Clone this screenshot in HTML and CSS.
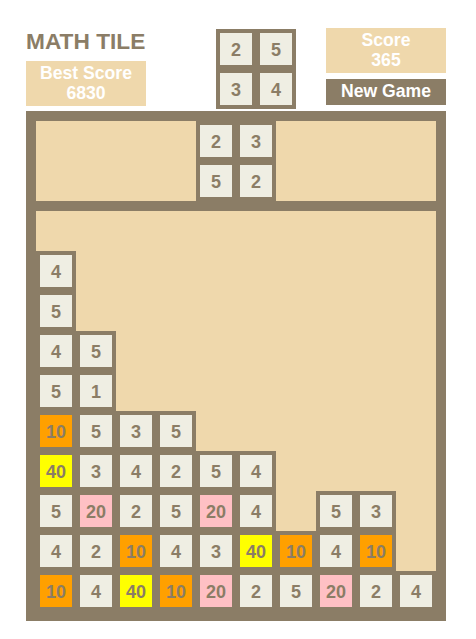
FILE: index.html
```html
<!DOCTYPE html>
<html>
<head>
<meta charset="utf-8">
<title>Math Tile</title>
<link rel="stylesheet" href="styles.css">
</head>
<body>
<div class="page">
  <div class="header">
    <div class="col">
      <div class="title">MATH TILE</div>
      <div class="info">Best Score<br>6830</div>
    </div>
    <div class="next">
      <div class="cell full"><div class="tile">2</div></div>
      <div class="cell full"><div class="tile">5</div></div>
      <div class="cell full"><div class="tile">3</div></div>
      <div class="cell full"><div class="tile">4</div></div>
    </div>
    <div class="col right">
      <div class="info">Score<br>365</div>
      <div class="btn">New Game</div>
    </div>
  </div>
  <div class="board">
    <div class="grid">
      <div class="cell"></div><div class="cell"></div><div class="cell"></div><div class="cell"></div>
      <div class="cell full"><div class="tile">2</div></div><div class="cell full"><div class="tile">3</div></div>
      <div class="cell"></div><div class="cell"></div><div class="cell"></div><div class="cell"></div>
      <div class="cell"></div><div class="cell"></div><div class="cell"></div><div class="cell"></div>
      <div class="cell full"><div class="tile">5</div></div><div class="cell full"><div class="tile">2</div></div>
      <div class="cell"></div><div class="cell"></div><div class="cell"></div><div class="cell"></div>
    </div>
    <div class="grid">
      <!-- row 0 -->
      <div class="cell"></div><div class="cell"></div><div class="cell"></div><div class="cell"></div><div class="cell"></div>
      <div class="cell"></div><div class="cell"></div><div class="cell"></div><div class="cell"></div><div class="cell"></div>
      <!-- row 1 -->
      <div class="cell full"><div class="tile">4</div></div>
      <div class="cell"></div><div class="cell"></div><div class="cell"></div><div class="cell"></div>
      <div class="cell"></div><div class="cell"></div><div class="cell"></div><div class="cell"></div><div class="cell"></div>
      <!-- row 2 -->
      <div class="cell full"><div class="tile">5</div></div>
      <div class="cell"></div><div class="cell"></div><div class="cell"></div><div class="cell"></div>
      <div class="cell"></div><div class="cell"></div><div class="cell"></div><div class="cell"></div><div class="cell"></div>
      <!-- row 3 -->
      <div class="cell full"><div class="tile">4</div></div>
      <div class="cell full"><div class="tile">5</div></div>
      <div class="cell"></div><div class="cell"></div><div class="cell"></div><div class="cell"></div>
      <div class="cell"></div><div class="cell"></div><div class="cell"></div><div class="cell"></div>
      <!-- row 4 -->
      <div class="cell full"><div class="tile">5</div></div>
      <div class="cell full"><div class="tile">1</div></div>
      <div class="cell"></div><div class="cell"></div><div class="cell"></div><div class="cell"></div>
      <div class="cell"></div><div class="cell"></div><div class="cell"></div><div class="cell"></div>
      <!-- row 5 -->
      <div class="cell full"><div class="tile t10">10</div></div>
      <div class="cell full"><div class="tile">5</div></div>
      <div class="cell full"><div class="tile">3</div></div>
      <div class="cell full"><div class="tile">5</div></div>
      <div class="cell"></div><div class="cell"></div><div class="cell"></div>
      <div class="cell"></div><div class="cell"></div><div class="cell"></div>
      <!-- row 6 -->
      <div class="cell full"><div class="tile t40">40</div></div>
      <div class="cell full"><div class="tile">3</div></div>
      <div class="cell full"><div class="tile">4</div></div>
      <div class="cell full"><div class="tile">2</div></div>
      <div class="cell full"><div class="tile">5</div></div>
      <div class="cell full"><div class="tile">4</div></div>
      <div class="cell"></div><div class="cell"></div><div class="cell"></div><div class="cell"></div>
      <!-- row 7 -->
      <div class="cell full"><div class="tile">5</div></div>
      <div class="cell full"><div class="tile t20">20</div></div>
      <div class="cell full"><div class="tile">2</div></div>
      <div class="cell full"><div class="tile">5</div></div>
      <div class="cell full"><div class="tile t20">20</div></div>
      <div class="cell full"><div class="tile">4</div></div>
      <div class="cell"></div>
      <div class="cell full"><div class="tile">5</div></div>
      <div class="cell full"><div class="tile">3</div></div>
      <div class="cell"></div>
      <!-- row 8 -->
      <div class="cell full"><div class="tile">4</div></div>
      <div class="cell full"><div class="tile">2</div></div>
      <div class="cell full"><div class="tile t10">10</div></div>
      <div class="cell full"><div class="tile">4</div></div>
      <div class="cell full"><div class="tile">3</div></div>
      <div class="cell full"><div class="tile t40">40</div></div>
      <div class="cell full"><div class="tile t10">10</div></div>
      <div class="cell full"><div class="tile">4</div></div>
      <div class="cell full"><div class="tile t10">10</div></div>
      <div class="cell"></div>
      <!-- row 9 -->
      <div class="cell full"><div class="tile t10">10</div></div>
      <div class="cell full"><div class="tile">4</div></div>
      <div class="cell full"><div class="tile t40">40</div></div>
      <div class="cell full"><div class="tile t10">10</div></div>
      <div class="cell full"><div class="tile t20">20</div></div>
      <div class="cell full"><div class="tile">2</div></div>
      <div class="cell full"><div class="tile">5</div></div>
      <div class="cell full"><div class="tile t20">20</div></div>
      <div class="cell full"><div class="tile">2</div></div>
      <div class="cell full"><div class="tile">4</div></div>
    </div>
  </div>
</div>
</body>
</html>
```
FILE: styles.css
```css
html, body {
  margin: 0;
  padding: 0;
  background: #ffffff;
}
body {
  font-family: "Liberation Sans", Arial, Helvetica, sans-serif;
  font-weight: bold;
}
.page {
  width: 420px;
  margin-left: 26px;
  padding-top: 28px;
}
.header {
  display: flex;
  align-items: flex-start;
}
.col {
  width: 120px;
  display: flex;
  flex-direction: column;
}
.col.right {
  margin-left: auto;
}
.title {
  font-size: 22.7px;
  line-height: 26px;
  color: #8b7d66;
  white-space: nowrap;
  margin-bottom: 7px;
}
.info {
  background: #efd8ac;
  color: #ffffff;
  font-size: 17.6px;
  line-height: 20px;
  text-align: center;
  padding: 2px 0 3px;
}
.btn {
  margin-top: 6px;
  background: #8b7d66;
  color: #ffffff;
  font-size: 17.6px;
  line-height: 24px;
  height: 26px;
  box-sizing: border-box;
  padding-bottom: 2px;
  text-align: center;
}
.next {
  margin-top: 1px;
  margin-left: 70px;
  display: grid;
  grid-template-columns: repeat(2, 40px);
  grid-auto-rows: 40px;
  background: #8b7d66;
}
.board {
  margin-top: 2px;
  background: #8b7d66;
  padding: 10px;
  display: flex;
  flex-direction: column;
  gap: 10px;
}
.grid {
  display: grid;
  grid-template-columns: repeat(10, 40px);
  grid-auto-rows: 40px;
}
.cell {
  background: #efd8ac;
}
.cell.full {
  background: #8b7d66;
  padding: 4px;
  box-sizing: border-box;
}
.tile {
  width: 32px;
  height: 32px;
  box-sizing: border-box;
  padding-top: 2px;
  background: #efeee3;
  color: #8b7d66;
  font-size: 18px;
  line-height: 30px;
  text-align: center;
}
.tile.t10 { background: #ffa000; }
.tile.t20 { background: #ffc0c4; }
.tile.t40 { background: #ffff00; }
```
